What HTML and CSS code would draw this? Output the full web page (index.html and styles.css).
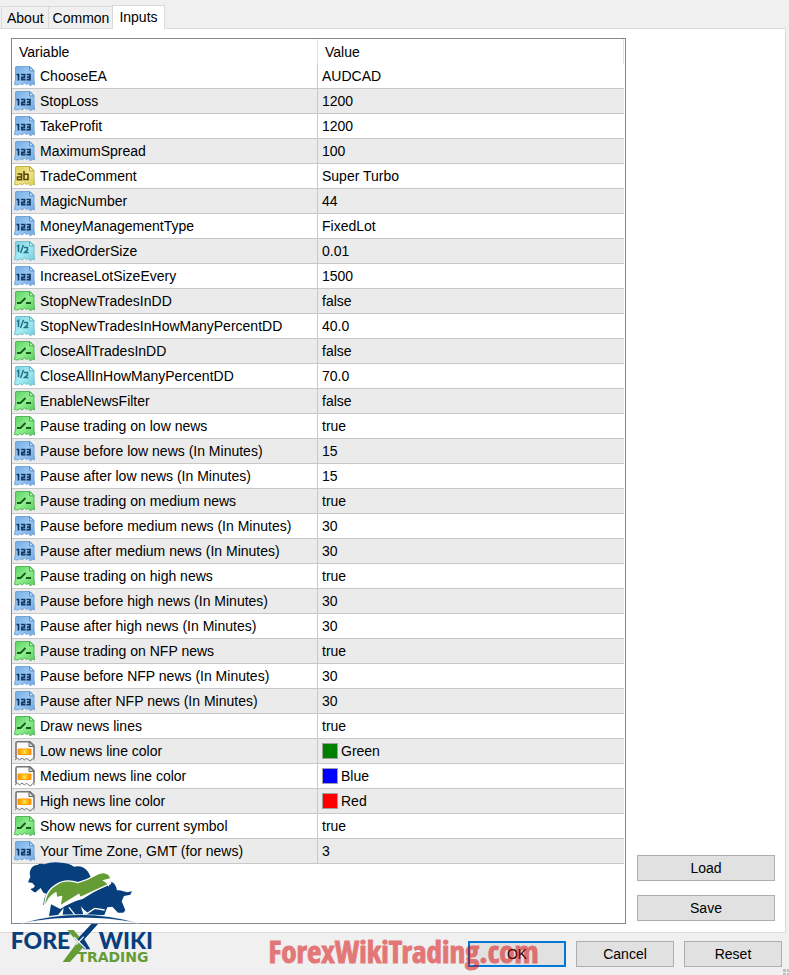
FILE: index.html
```
<!DOCTYPE html>
<html lang="en">

<head>
    <meta charset="UTF-8">
    <meta name="viewport" content="width=device-width, initial-scale=1.0">
    <title>Inputs</title>

    <link rel="stylesheet" href="styles.css">
</head>

<body>

    <svg class="defs" aria-hidden="true">
        <defs>
            <linearGradient id="blueFill" x1="0" y1="0" x2="1" y2="1">
                <stop offset="0" stop-color="#6fa9e2" />
                <stop offset="0.5" stop-color="#9cc9f5" />
                <stop offset="1" stop-color="#6aa5e2" />
            </linearGradient>
            <linearGradient id="yellowFill" x1="0" y1="0" x2="1" y2="1">
                <stop offset="0" stop-color="#d9cd55" />
                <stop offset="0.5" stop-color="#f1e88c" />
                <stop offset="1" stop-color="#d8ca50" />
            </linearGradient>
            <linearGradient id="cyanFill" x1="0" y1="0" x2="1" y2="1">
                <stop offset="0" stop-color="#76cfdf" />
                <stop offset="0.5" stop-color="#a5edf5" />
                <stop offset="1" stop-color="#70cadb" />
            </linearGradient>
            <linearGradient id="greenFill" x1="0" y1="0" x2="1" y2="1">
                <stop offset="0" stop-color="#58cf60" />
                <stop offset="0.5" stop-color="#90f08f" />
                <stop offset="1" stop-color="#55cb5c" />
            </linearGradient>
            <linearGradient id="orangeFill">
                <stop offset="0" stop-color="#ff8500" />
                <stop offset="0.5" stop-color="#ffe23a" />
                <stop offset="1" stop-color="#ff8500" />
            </linearGradient>
            <path id="sheet" d="M2 1.500H16L20 5.500V14L20.500 20L18.500 19L16.500 21L14.500 18.500L12.500 19.500L10.500 18L8 20L6 18.500L4 20L0.500 19.500L1.500 14V2Z" />
            <path id="fold" d="M15.500 1.500V6H20Z" />
            <symbol id="int" viewBox="0 0 22 22">
                <use href="#sheet" fill="url(#blueFill)" stroke="#76a6d5" />
                <use href="#fold" fill="#b9dcfb" stroke="#5e92c7" />
                <path d="M2.500 9.500H4.500V15.500M7 9.500H10.500V12.300H7.800V14.700H11.500M12.500 9.500H16V14.700H12.500M13 12.100H16" fill="none" stroke="#123861" stroke-width="1.700" />
            </symbol>
            <symbol id="string" viewBox="0 0 22 22">
                <use href="#sheet" fill="url(#yellowFill)" stroke="#c4b74f" />
                <use href="#fold" fill="#f8f2b5" stroke="#b4a53c" />
                <path d="M3.500 9H7.500V14.700H3.500V12H7.500M10 6V14.500H14V9.200H10" fill="none" stroke="#574a08" stroke-width="1.600" />
            </symbol>
            <symbol id="double" viewBox="0 0 22 22">
                <use href="#sheet" fill="url(#cyanFill)" stroke="#79bfcc" />
                <use href="#fold" fill="#c5f5fa" stroke="#5badbd" />
                <path d="M3 6.500L4.500 5.500V12M6.500 13L9.500 5M10 7.500H13.500V9.800L10.500 12.500H14.500" fill="none" stroke="#246f85" stroke-width="1.500" />
            </symbol>
            <symbol id="bool" viewBox="0 0 22 22">
                <use href="#sheet" fill="url(#greenFill)" stroke="#57b65c" />
                <use href="#fold" fill="#b5f7b4" stroke="#45a94b" />
                <path d="M3 13H6.500L11.500 8M12 13H17" fill="none" stroke="#155b20" stroke-width="1.900" />
            </symbol>
            <symbol id="color" viewBox="0 0 22 22">
                <path d="M2 18.500V3Q2 1.700 3.500 1.700H16L20 5.700V18.500" fill="#fbfbfb" stroke="#777" stroke-width="1.600" />
                <path d="M1 20L3.500 18L5.500 20L8 18L10.500 20L12.500 18L14.500 20L16.500 21L18.500 18.500L20.500 20" fill="none" stroke="#777" />
                <path d="M15 1.700V6.500H20Z" fill="#ddd" stroke="#666" />
                <path d="M4 9H17V14.500H4Z" fill="url(#orangeFill)" stroke="#ff9800" />
            </symbol>
        </defs>
    </svg>

    <div class="dialog">
        <div class="tabs" role="tablist">
            <button class="tab" role="tab">About</button>
            <button class="tab" role="tab">Common</button>
            <button class="tab tab-active" role="tab" aria-selected="true">Inputs</button>
        </div>

        <div class="panel">
            <div class="grid">
                <table class="inputs">
                    <thead>
                        <tr><th>Variable</th><th>Value</th></tr>
                    </thead>
                    <tbody>
                        <tr><td><svg class="icon"><use href="#int" /></svg>ChooseEA</td><td>AUDCAD</td></tr>
                        <tr><td><svg class="icon"><use href="#int" /></svg>StopLoss</td><td>1200</td></tr>
                        <tr><td><svg class="icon"><use href="#int" /></svg>TakeProfit</td><td>1200</td></tr>
                        <tr><td><svg class="icon"><use href="#int" /></svg>MaximumSpread</td><td>100</td></tr>
                        <tr><td><svg class="icon"><use href="#string" /></svg>TradeComment</td><td>Super Turbo</td></tr>
                        <tr><td><svg class="icon"><use href="#int" /></svg>MagicNumber</td><td>44</td></tr>
                        <tr><td><svg class="icon"><use href="#int" /></svg>MoneyManagementType</td><td>FixedLot</td></tr>
                        <tr><td><svg class="icon"><use href="#double" /></svg>FixedOrderSize</td><td>0.01</td></tr>
                        <tr><td><svg class="icon"><use href="#int" /></svg>IncreaseLotSizeEvery</td><td>1500</td></tr>
                        <tr><td><svg class="icon"><use href="#bool" /></svg>StopNewTradesInDD</td><td>false</td></tr>
                        <tr><td><svg class="icon"><use href="#double" /></svg>StopNewTradesInHowManyPercentDD</td><td>40.0</td></tr>
                        <tr><td><svg class="icon"><use href="#bool" /></svg>CloseAllTradesInDD</td><td>false</td></tr>
                        <tr><td><svg class="icon"><use href="#double" /></svg>CloseAllInHowManyPercentDD</td><td>70.0</td></tr>
                        <tr><td><svg class="icon"><use href="#bool" /></svg>EnableNewsFilter</td><td>false</td></tr>
                        <tr><td><svg class="icon"><use href="#bool" /></svg>Pause trading on low news</td><td>true</td></tr>
                        <tr><td><svg class="icon"><use href="#int" /></svg>Pause before low news (In Minutes)</td><td>15</td></tr>
                        <tr><td><svg class="icon"><use href="#int" /></svg>Pause after low news (In Minutes)</td><td>15</td></tr>
                        <tr><td><svg class="icon"><use href="#bool" /></svg>Pause trading on medium news</td><td>true</td></tr>
                        <tr><td><svg class="icon"><use href="#int" /></svg>Pause before medium news (In Minutes)</td><td>30</td></tr>
                        <tr><td><svg class="icon"><use href="#int" /></svg>Pause after medium news (In Minutes)</td><td>30</td></tr>
                        <tr><td><svg class="icon"><use href="#bool" /></svg>Pause trading on high news</td><td>true</td></tr>
                        <tr><td><svg class="icon"><use href="#int" /></svg>Pause before high news (In Minutes)</td><td>30</td></tr>
                        <tr><td><svg class="icon"><use href="#int" /></svg>Pause after high news (In Minutes)</td><td>30</td></tr>
                        <tr><td><svg class="icon"><use href="#bool" /></svg>Pause trading on NFP news</td><td>true</td></tr>
                        <tr><td><svg class="icon"><use href="#int" /></svg>Pause before NFP news (In Minutes)</td><td>30</td></tr>
                        <tr><td><svg class="icon"><use href="#int" /></svg>Pause after NFP news (In Minutes)</td><td>30</td></tr>
                        <tr><td><svg class="icon"><use href="#bool" /></svg>Draw news lines</td><td>true</td></tr>
                        <tr><td><svg class="icon"><use href="#color" /></svg>Low news line color</td><td><span class="swatch green"></span>Green</td></tr>
                        <tr><td><svg class="icon"><use href="#color" /></svg>Medium news line color</td><td><span class="swatch blue"></span>Blue</td></tr>
                        <tr><td><svg class="icon"><use href="#color" /></svg>High news line color</td><td><span class="swatch red"></span>Red</td></tr>
                        <tr><td><svg class="icon"><use href="#bool" /></svg>Show news for current symbol</td><td>true</td></tr>
                        <tr><td><svg class="icon"><use href="#int" /></svg>Your Time Zone, GMT (for news)</td><td>3</td></tr>
                    </tbody>
                </table>
            </div>
            <div class="side">
                <button class="btn">Load</button>
                <button class="btn">Save</button>
            </div>
        </div>

        <div class="footer">
            <button class="btn btn-default">OK</button>
            <button class="btn">Cancel</button>
            <button class="btn">Reset</button>
        </div>

        <svg class="logo" viewBox="0 0 510 375" role="img" aria-label="Forex Wiki Trading">
            <!-- bear -->
            <path fill="#063f7b" d="M84 97L91 80Q86 67 94 55Q99 46 112 45Q120 38 133 43Q155 34 184 38Q209 40 222 50Q247 44 264 65Q272 76 273 90L145 140Q135 151 135 167L130 164Q131 145 139 131L130 128L122 114L111 123Q106 131 98 123L91 117Q101 116 105 108L97 99Z" />
            <!-- legs and bull -->
            <path fill="#063f7b" d="M153 163L147 198L174 195L191 173L188 194H250L243 168L262 195H313L322 172L337 170L354 188H370L376 181L365 154L372 138L391 134L396 124Q382 129 370 124Q359 119 351 121Q347 99 331 94Q285 125 248 147Q211 157 181 177Z" />
            <path fill="none" stroke="#fff" stroke-width="4" d="M207 172L226 196M245 176L262 190L284 175L314 180" />
            <!-- arrow -->
            <path fill="#659c35" stroke="#fff" stroke-width="4" stroke-linejoin="round" d="M134 175Q132 124 170 103Q196 85 234 98Q260 91 287 75Q311 62 325 73Q337 83 331 101L240 143L237 133L180 168L185 139L169 143L168 128Q144 139 134 175Z" />
            <path fill="#fff" d="M307 91L333 84L326 110L319 99Z" />
            <path fill="#063f7b" stroke="#fff" stroke-width="2" d="M66 219Q242 168 414 219Q242 188 66 219Z" />
            <!-- wordmark -->
            <text class="logo-name" x="32" y="297">FORE</text>
            <text class="logo-name" x="296" y="297">WIKI</text>
            <path fill="#659c35" d="M202 240H221L238 260L229 273ZM188 336H210L257 284L240 266Z" />
            <path fill="#063f7b" d="M274 222H294L253 268L271 298H252L230 270L241 257Z" />
            <path fill="none" stroke="#efefef" stroke-width="4" d="M222 261L257 296M229 284L251 260" />
            <text class="logo-trading" x="232" y="336">TRADING</text>
        </svg>
        <div class="watermark">ForexWikiTrading.com</div>
        <div class="grip"></div>
    </div>

</body>

</html>
```
FILE: styles.css
```
* {
    box-sizing: border-box;
}

body {
    margin: 0;
    background: #f0f0f0;
    color: #000;
}

body,
button,
table {
    font-family: "Liberation Sans", Arial, sans-serif;
    font-size: 14px;
    line-height: 16px;
}

.defs {
    position: absolute;
    width: 0;
    height: 0;
}

.dialog {
    position: relative;
    display: flex;
    flex-direction: column;
    min-height: 100vh;
    overflow: hidden;
}

.tabs {
    display: flex;
    align-items: flex-end;
    padding: 5px 0 0 1px;
}

.tab {
    border: 1px solid #d9d9d9;
    border-right: 0;
    border-bottom: 0;
    background: #f0f0f0;
    padding: 3px 4px 2px 5px;
}

.tab + .tab {
    padding: 3px 3px 2px 4px;
}

.tabs .tab-active {
    position: relative;
    z-index: 1;
    margin-bottom: -1px;
    border-right: 1px solid #d9d9d9;
    background: #fff;
    padding: 3px 6px 4px;
}

.panel {
    display: flex;
    flex: 1;
    gap: 11px;
    margin-right: 3px;
    padding: 9px 10px 8px 11px;
    border: 1px solid #dcdcdc;
    border-left: 0;
    background: #fff;
}

.grid {
    flex: 1;
    border: 1px solid #828790;
    padding-right: 1px;
}

.inputs {
    width: 100%;
    border-spacing: 0;
    table-layout: fixed;
}

th,
td {
    height: 25px;
    padding: 0 4px;
    border-bottom: 1px solid #c8c8c8;
    text-align: left;
    vertical-align: middle;
    white-space: nowrap;
}

td:first-child {
    border-right: 1px solid #c8c8c8;
    padding-left: 2px;
    line-height: 22px;
}

th {
    border-bottom: 0;
    border-right: 1px solid #e5e5e5;
    padding: 0 6px 0 7px;
    font-weight: normal;
}

tbody tr:nth-child(even) {
    background: #ebebeb;
}

.icon {
    width: 22px;
    height: 22px;
    margin-right: 4px;
    vertical-align: top;
}

.swatch {
    display: inline-block;
    width: 16px;
    height: 16px;
    margin-right: 3px;
    border: 1px solid #a0a0a0;
    vertical-align: top;
}

.green {
    background: #008000;
}

.blue {
    background: #00f;
}

.red {
    background: #f00;
}

.side {
    display: flex;
    flex-direction: column;
    justify-content: flex-end;
    gap: 14px;
    width: 138px;
    padding-bottom: 3px;
}

.btn {
    height: 26px;
    padding: 0;
    border: 1px solid #adadad;
    background: #e1e1e1;
}

.footer {
    display: flex;
    justify-content: flex-end;
    gap: 10px;
    padding: 8px 7px;
}

.footer .btn {
    width: 98px;
}

.footer .btn-default {
    border: 2px solid #0078d7;
}

.logo {
    position: absolute;
    left: 0;
    bottom: 0;
    width: 170px;
    height: 125px;
}

.logo-name {
    fill: #063f7b;
    font: 900 69px Lato, sans-serif;
}

.logo-trading {
    fill: #659c35;
    font: bold 42px "DejaVu Sans", sans-serif;
}

.watermark {
    position: absolute;
    bottom: 3px;
    left: 0;
    right: 0;
    padding-left: 18px;
    color: #d80000;
    font: bold 31px "Liberation Sans Narrow", "Open Sans Condensed", sans-serif;
    -webkit-text-stroke: 1px #d80000;
    opacity: 0.5;
    text-align: center;
    pointer-events: none;
}

.grip {
    position: absolute;
    right: 0;
    bottom: 0;
    width: 6px;
    height: 6px;
    background: linear-gradient(90deg, transparent 3px, #f0f0f0 3px, #f0f0f0 4px, transparent 4px), linear-gradient(#bfbfbf 3px, #f0f0f0 3px, #f0f0f0 4px, #bfbfbf 4px);
}
```
